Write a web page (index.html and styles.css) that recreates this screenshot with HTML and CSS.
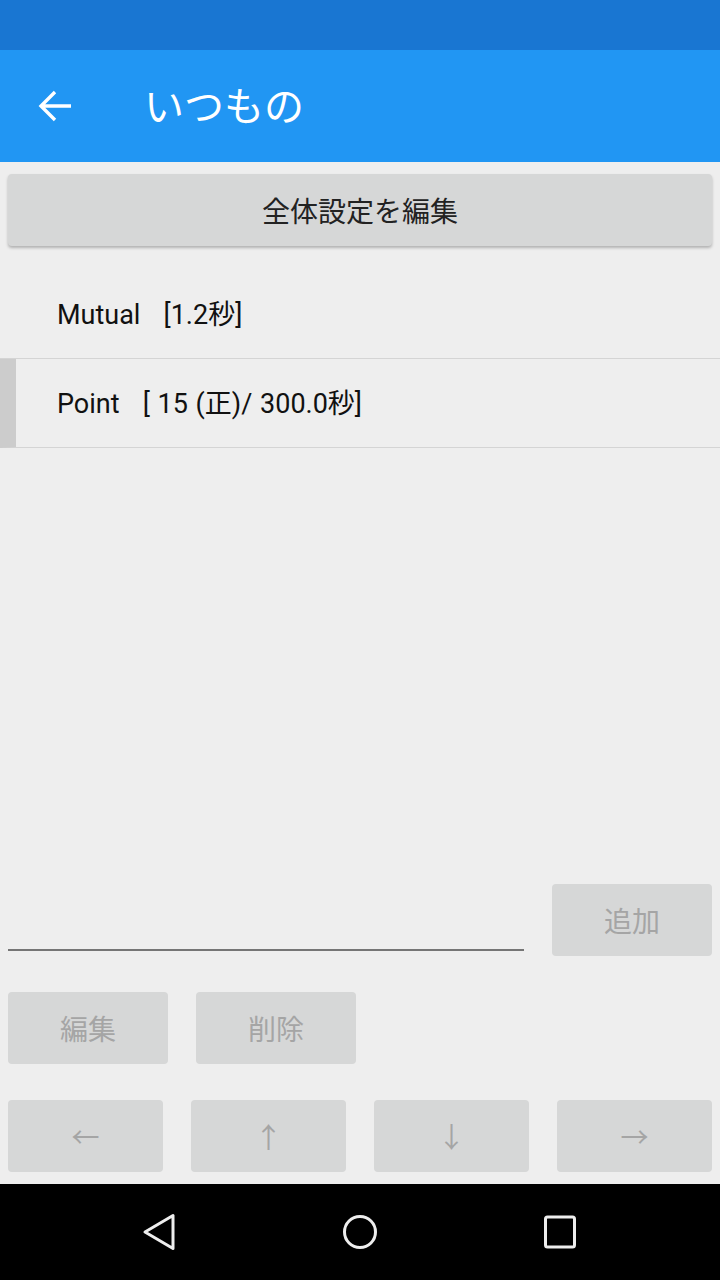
FILE: index.html
```html
<!DOCTYPE html>
<html lang="ja">
<head>
<meta charset="utf-8">
<title>いつもの</title>
<link rel="stylesheet" href="styles.css">
</head>
<body>
<div class="screen">
  <div class="status"></div>
  <header class="appbar">
    <svg class="back" width="34" height="34" viewBox="0 0 34 34">
      <path d="M33 17H3M17 3L3 17l14 14" fill="none" stroke="#fff" stroke-width="3.4"/>
    </svg>
    <h1 class="title">いつもの</h1>
  </header>
  <main class="main">
    <button class="raised">全体設定を編集</button>
    <ul class="list">
      <li class="row">Mutual   [1.2秒]</li>
      <li class="row selected">Point   [ 15 (正)/ 300.0秒]</li>
    </ul>
    <div class="spacer"></div>
    <div class="input-row">
      <div class="field"></div>
      <button class="flat">追加</button>
    </div>
    <div class="edit-row">
      <button class="flat">編集</button>
      <button class="flat">削除</button>
    </div>
    <div class="arrow-row">
      <button class="flat arrow">←</button>
      <button class="flat arrow">↑</button>
      <button class="flat arrow">↓</button>
      <button class="flat arrow">→</button>
    </div>
  </main>
  <nav class="navbar">
    <svg width="40" height="40" viewBox="0 0 40 40"><path d="M33 3.5V36.5L5 20Z" fill="none" stroke="#eee" stroke-width="3" stroke-linejoin="round"/></svg>
    <svg width="40" height="40" viewBox="0 0 40 40"><circle cx="20" cy="20" r="15.5" fill="none" stroke="#eee" stroke-width="3"/></svg>
    <svg width="40" height="40" viewBox="0 0 40 40"><rect x="5.5" y="5" width="29" height="30" rx="2" fill="none" stroke="#eee" stroke-width="3"/></svg>
  </nav>
</div>
</body>
</html>
```

FILE: styles.css
```css
* { box-sizing: border-box; }
html, body { margin: 0; padding: 0; }
body {
  background: #eeeeee;
  font-family: Roboto, "Noto Sans CJK JP", sans-serif;
}
.screen {
  width: 720px;
  height: 1280px;
  display: flex;
  flex-direction: column;
  background: #eeeeee;
}
.status {
  height: 50px;
  background: #1976d2;
}
.appbar {
  height: 112px;
  background: #2196f3;
  display: flex;
  align-items: center;
  padding-left: 38px;
}
.back { display: block; }
.title {
  margin: 0 0 4px 72px;
  font-family: "Noto Sans CJK JP", sans-serif;
  font-weight: 400;
  font-size: 40px;
  color: #fff;
  letter-spacing: 0;
}
.main {
  flex: 1;
  display: flex;
  flex-direction: column;
  padding: 12px 8px 12px;
}
button {
  font-family: "Noto Sans CJK JP", sans-serif;
  font-size: 28px;
  border: none;
  border-radius: 4px;
  background: #d6d7d7;
  padding: 0;
  margin: 0;
}
.raised {
  height: 72px;
  width: 100%;
  color: #222;
  box-shadow: 0 2px 3px rgba(0,0,0,0.25);
}
.list {
  list-style: none;
  margin: 24px -8px 0;
  padding: 0;
}
.row {
  height: 89px;
  border-bottom: 1px solid #d4d4d4;
  display: flex;
  align-items: center;
  padding-left: 57px;
  padding-bottom: 3px;
  font-size: 27px;
  word-spacing: 1px;
  color: #111;
  white-space: pre;
}
.row.selected {
  border-left: 16px solid #cccccc;
  padding-left: 41px;
}
.spacer { flex: 1; }
.input-row {
  display: flex;
  align-items: flex-start;
  gap: 28px;
}
.field {
  flex: 1;
  height: 67px;
  border-bottom: 2px solid #757575;
}
.flat {
  width: 160px;
  height: 72px;
  color: #a5a5a5;
}
.edit-row {
  margin-top: 36px;
  display: flex;
  gap: 28px;
}
.arrow-row {
  margin-top: 36px;
  display: grid;
  grid-template-columns: repeat(4, 1fr);
  gap: 28px;
}
.arrow {
  width: auto;
  font-size: 28px;
}
.navbar {
  height: 96px;
  background: #000;
  display: flex;
  justify-content: center;
  align-items: center;
  gap: 160px;
}
.navbar svg { display: block; }
```
